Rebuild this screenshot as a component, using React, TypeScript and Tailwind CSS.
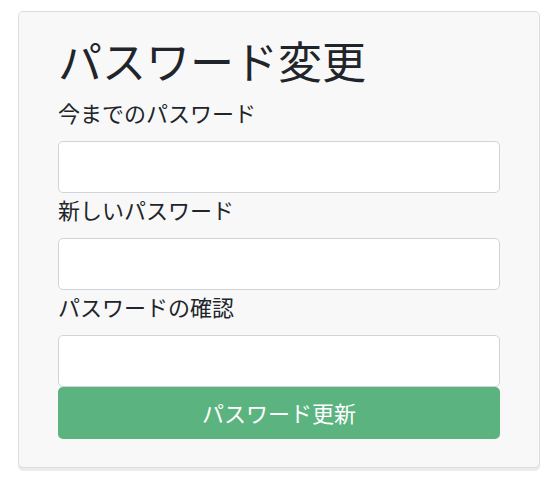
export default function App() {
  const fields = ["今までのパスワード", "新しいパスワード", "パスワードの確認"];
  return (
    <div
      className="min-h-screen bg-white pt-[11px] pl-[18px] pr-[9px] text-[#212529]"
      style={{ fontFamily: '"Noto Sans CJK JP", "Noto Sans", sans-serif' }}
    >
      <div className="w-[522px] rounded-[5px] border border-[#dcdcdc] bg-[#f8f8f8] px-[39px] pt-[22px] pb-[28px] shadow-[0_3px_0_rgba(0,0,0,0.08)]">
        <h1 className="mb-[9px] text-[44px] leading-[1.2] font-normal">パスワード変更</h1>
        <form onSubmit={(e) => e.preventDefault()}>
          {fields.map((label) => (
            <div key={label}>
              <label className="mb-[12px] block text-[22px] leading-[33px]">{label}</label>
              <input
                type="password"
                className="block h-[52px] w-full rounded-[5px] border border-[#ced4da] bg-white px-3 text-[22px] outline-none"
              />
            </div>
          ))}
          <button
            type="submit"
            className="block h-[52px] w-full rounded-[5px] bg-[#5bb37f] text-[22px] text-white"
          >
            パスワード更新
          </button>
        </form>
      </div>
    </div>
  );
}
